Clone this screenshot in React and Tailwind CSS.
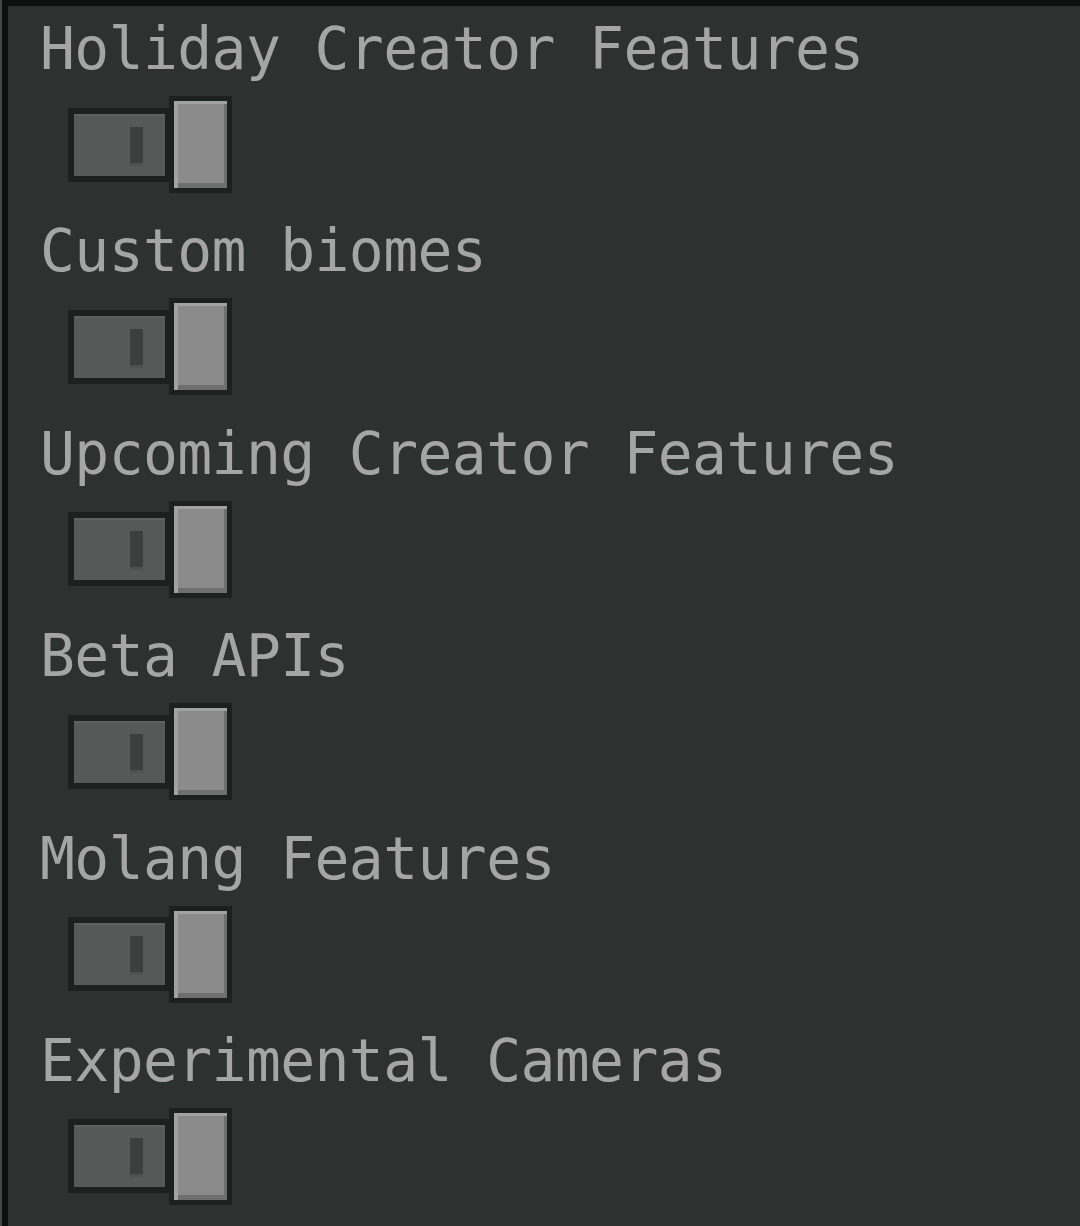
const toggles = [
  'Holiday Creator Features',
  'Custom biomes',
  'Upcoming Creator Features',
  'Beta APIs',
  'Molang Features',
  'Experimental Cameras',
];

function Toggle() {
  return (
    <div className="ml-[28px] mt-[18px] flex h-[97px] items-center">
      <div className="relative h-[74px] w-[103px] border-[6px] border-[#1c201f] bg-[#555a58] shadow-[inset_0_2px_0_#5d6260]">
        <div className="absolute left-[56px] top-[13px] h-[36px] w-[13px] bg-[#3b3f3e] shadow-[0_3px_0_#4d5250]" />
      </div>
      <div className="-ml-[2px] h-[97px] w-[63px] border-[5px] border-[#1c201f] bg-[#8b8b8b] shadow-[inset_4px_3px_0_#a2a2a2,inset_-3px_-5px_0_#6f6f6f]" />
    </div>
  );
}

export default function App() {
  return (
    <div className="h-[1226px] w-[1080px] overflow-hidden bg-[#454847] pl-[2px]">
      <div className="h-full border-l-[6px] border-t-[6px] border-[#0e1010] bg-[#2d3130]">
        {toggles.map((label) => (
          <div key={label} className="h-[202.4px] pl-[32px] pt-[14px]">
            <div className="whitespace-nowrap font-['DejaVu_Sans_Mono',monospace] text-[58px] leading-[58px] tracking-[-0.6px] text-[#a5a5a5]">
              {label}
            </div>
            <Toggle />
          </div>
        ))}
      </div>
    </div>
  );
}
